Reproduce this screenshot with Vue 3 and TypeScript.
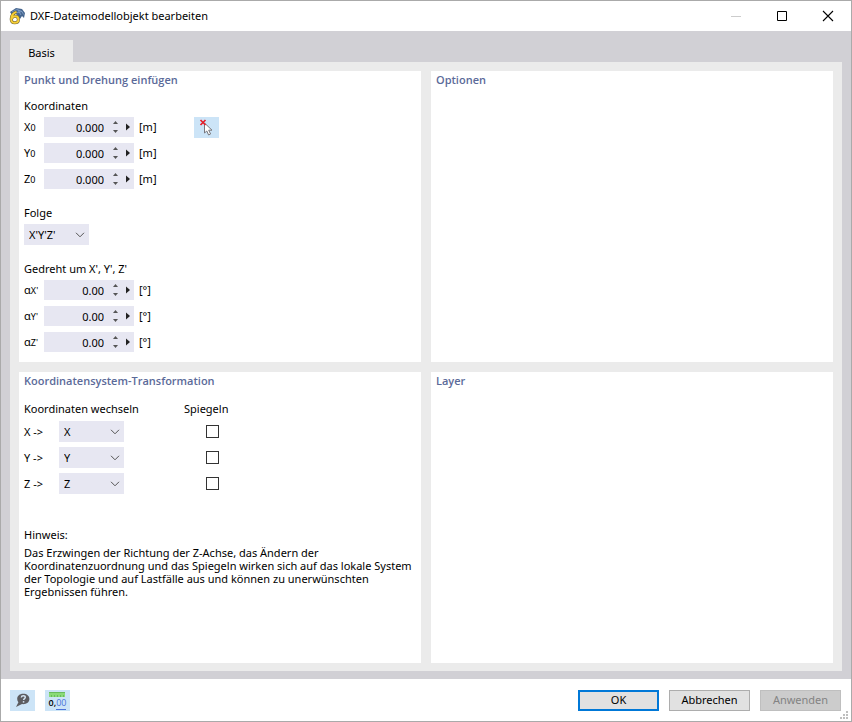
<script setup lang="ts">
import { reactive, ref } from 'vue'

interface NumberField {
  id: string
  base: string
  sub: string
  value: string
}

interface AxisMapping {
  axis: string
  target: string
  mirror: boolean
}

const coordinates = reactive<NumberField[]>([
  { id: 'x0', base: 'X', sub: '0', value: '0.000' },
  { id: 'y0', base: 'Y', sub: '0', value: '0.000' },
  { id: 'z0', base: 'Z', sub: '0', value: '0.000' },
])

const rotations = reactive<NumberField[]>([
  { id: 'ax', base: 'α', sub: "X'", value: '0.00' },
  { id: 'ay', base: 'α', sub: "Y'", value: '0.00' },
  { id: 'az', base: 'α', sub: "Z'", value: '0.00' },
])

const groups = [
  { fields: coordinates, unit: '[m]', digits: 3 },
  { fields: rotations, unit: '[°]', digits: 2 },
]

const sequences = ["X'Y'Z'", "X'Z'Y'", "Y'X'Z'", "Y'Z'X'", "Z'X'Y'", "Z'Y'X'"]
const sequence = ref("X'Y'Z'")

const axes = ['X', 'Y', 'Z']
const mappings = reactive<AxisMapping[]>(
  axes.map((axis) => ({ axis, target: axis, mirror: false })),
)

function step(field: NumberField, delta: number, digits: number) {
  field.value = ((parseFloat(field.value) || 0) + delta).toFixed(digits)
}
</script>

<template>
  <div class="dialog">
    <header class="titlebar">
      <svg class="app-icon" width="18" height="18" viewBox="0 0 18 18" aria-hidden="true">
        <path d="M2 5 8 1l6 1 3 4-1 5-2-2-2 3-4-5-4 1z" fill="#46668f" />
        <path d="M4 5 9 2.500l5 2M8 6l6-1.500 1.500 3M10 3l3 5" stroke="#86a5cc" fill="none" stroke-width=".8" />
        <path d="M8.500 4.800C5 6 3.200 8.800 3.200 12c0 2.400 1.300 3.800 3.500 3.800s3.700-1.400 3.700-3.400-1.300-3.200-3.200-3.200c-1.800 0-3.400 1-3.700 2.800" fill="none" stroke="#6e6438" stroke-width="3" />
        <path d="M8.500 4.800C5 6 3.200 8.800 3.200 12c0 2.400 1.300 3.800 3.500 3.800s3.700-1.400 3.700-3.400-1.300-3.200-3.200-3.200c-1.800 0-3.400 1-3.700 2.800" fill="none" stroke="#f7cf35" stroke-width="1.900" />
      </svg>
      <h1>DXF-Dateimodellobjekt bearbeiten</h1>
      <div class="window-controls">
        <button type="button" aria-label="Minimieren" disabled>
          <svg width="12" height="12" viewBox="0 0 12 12"><path d="M1 6.500h10" stroke="#ccc" /></svg>
        </button>
        <button type="button" aria-label="Maximieren">
          <svg width="12" height="12" viewBox="0 0 12 12"><path d="M1.500 1.500h9v9h-9z" stroke="#000" fill="none" /></svg>
        </button>
        <button type="button" aria-label="Schließen">
          <svg width="12" height="12" viewBox="0 0 12 12"><path d="m1 1 10 10M11 1 1 11" stroke="#000" stroke-width="1.100" /></svg>
        </button>
      </div>
    </header>

    <main class="workspace">
      <div class="tabs" role="tablist">
        <button type="button" class="tab" role="tab" aria-selected="true">Basis</button>
      </div>
      <div class="page" role="tabpanel" aria-label="Basis">
        <section class="panel">
          <h2>Punkt und Drehung einfügen</h2>
          <template v-for="(group, index) in groups" :key="index">
            <div v-if="index === 1" class="block">
              <label class="heading" for="sequence">Folge</label>
              <span class="select">
                <select id="sequence" v-model="sequence">
                  <option v-for="item in sequences" :key="item">{{ item }}</option>
                </select>
                <svg class="chevron" width="10" height="6" viewBox="0 0 10 6"><path d="m1 .8 4 4 4-4" /></svg>
              </span>
            </div>
            <div class="block">
              <h3 class="heading">{{ index === 0 ? 'Koordinaten' : "Gedreht um X', Y', Z'" }}</h3>
              <div class="inputs">
                <div class="fields">
                  <div v-for="field in group.fields" :key="field.id" class="field">
                    <label :for="field.id">{{ field.base }}<span class="index">{{ field.sub }}</span></label>
                    <div class="spin">
                      <input :id="field.id" v-model="field.value" type="text" inputmode="decimal" />
                      <span class="arrows">
                        <button type="button" aria-label="Erhöhen" @click="step(field, 1, group.digits)">
                          <svg width="5" height="4" viewBox="0 0 5 4"><path d="M2.500 0 5 3H0z" /></svg>
                        </button>
                        <button type="button" aria-label="Verringern" @click="step(field, -1, group.digits)">
                          <svg width="5" height="4" viewBox="0 0 5 4"><path d="M2.500 4 0 1h5z" /></svg>
                        </button>
                      </span>
                      <button type="button" class="more" aria-label="Weitere Optionen">
                        <svg width="5" height="8" viewBox="0 0 5 8"><path d="M0 .5 4 4 0 7.500z" /></svg>
                      </button>
                    </div>
                    <span class="unit">{{ group.unit }}</span>
                  </div>
                </div>
                <button v-if="index === 0" type="button" class="tool" aria-label="Punkt auswählen">
                  <svg width="15" height="17" viewBox="0 0 15 17">
                    <path d="M5.500 4v10l2.300-2 1.800 4 2-1-1.900-3.800H13z" fill="#fff" stroke="#77777d" />
                    <path d="m1.500 1 5 5M6.500 1l-5 5" stroke="#e5202b" stroke-width="1.700" />
                  </svg>
                </button>
              </div>
            </div>
          </template>
        </section>

        <section class="panel"><h2>Optionen</h2></section>

        <section class="panel">
          <h2>Koordinatensystem-Transformation</h2>
          <div class="mapping">
            <h3 class="heading wide">Koordinaten wechseln</h3>
            <h3 class="heading">Spiegeln</h3>
            <template v-for="row in mappings" :key="row.axis">
              <label :for="'map-' + row.axis">{{ row.axis }} -&gt;</label>
              <span class="select">
                <select :id="'map-' + row.axis" v-model="row.target">
                  <option v-for="axis in axes" :key="axis">{{ axis }}</option>
                </select>
                <svg class="chevron" width="10" height="6" viewBox="0 0 10 6"><path d="m1 .8 4 4 4-4" /></svg>
              </span>
              <input v-model="row.mirror" type="checkbox" :aria-label="row.axis + ' spiegeln'" />
            </template>
          </div>
          <div class="note">
            <h3 class="heading">Hinweis:</h3>
            <p>
              Das Erzwingen der Richtung der Z-Achse, das Ändern der
              Koordinatenzuordnung und das Spiegeln wirken sich auf das lokale System
              der Topologie und auf Lastfälle aus und können zu unerwünschten
              Ergebnissen führen.
            </p>
          </div>
        </section>

        <section class="panel"><h2>Layer</h2></section>
      </div>
    </main>

    <footer class="footer">
      <button type="button" class="tool" aria-label="Hilfe">
        <svg width="15" height="15" viewBox="0 0 15 15">
          <path d="M8.200.8C4.600.8 2.200 3 2.200 6c0 1.300.4 2.400 1.200 3.300L1 14l6-2.900c4.500.4 7.400-1.900 7.400-5.100S11.800.8 8.200.8z" fill="#5c5c60" />
          <path d="M6.300 4.500c.1-1.200.9-1.800 2-1.800s2 .6 2 1.600c0 1.300-1.700 1.400-1.700 2.800" fill="none" stroke="#d4e4f2" stroke-width="1.400" />
          <path d="M7.800 8.100h1.500v1.500H7.800z" fill="#d4e4f2" />
        </svg>
      </button>
      <button type="button" class="tool units" aria-label="Einheiten und Dezimalstellen">
        <svg width="16" height="5" viewBox="0 0 16 5">
          <path d="M0 0h16v5H0z" fill="#8ada79" />
          <path d="M2.500 3v2M5.500 3v2M8.500 3v2M11.500 3v2M14.500 3v2M0 .5h16" stroke="#5fb254" stroke-width=".8" />
        </svg>
        <span class="digits">0,<span class="decimals">00</span></span>
      </button>
      <div class="actions">
        <button type="button" class="action primary">OK</button>
        <button type="button" class="action">Abbrechen</button>
        <button type="button" class="action" disabled>Anwenden</button>
      </div>
      <svg class="grip" width="8" height="8" viewBox="0 0 8 8" aria-hidden="true">
        <path d="M6 0h2v2H6zM3 3h2v2H3zM6 3h2v2H6zM0 6h2v2H0zM3 6h2v2H3zM6 6h2v2H6z" fill="#bfbfbf" />
      </svg>
    </footer>
  </div>
</template>

<style>
body {
  margin: 0;
}
</style>

<style scoped>
.dialog,
.dialog * {
  box-sizing: border-box;
}

.dialog {
  display: flex;
  flex-direction: column;
  min-height: 100vh;
  border: 1px solid #aaa;
  background: #fff;
  color: #000;
  font-family: "Noto Sans", "Open Sans", sans-serif;
  font-size: 11px;
  line-height: 16px;
}

button,
input,
select {
  margin: 0;
  padding: 0;
  border: 0;
  border-radius: 0;
  background: none;
  color: inherit;
  font: inherit;
}

svg {
  display: block;
}

h1,
h2,
h3,
p {
  margin: 0;
  font-size: inherit;
  font-weight: 400;
}

.titlebar {
  display: flex;
  align-items: center;
  height: 30px;
  padding-left: 7px;
}

.titlebar h1 {
  margin-left: 4px;
}

.window-controls {
  display: flex;
  margin-left: auto;
}

.window-controls button {
  display: grid;
  place-items: center;
  width: 46px;
  height: 30px;
}

.workspace {
  display: flex;
  flex: 1;
  flex-direction: column;
  padding: 9px 9px 8px;
  background: #d1d0d5;
}

.tab {
  width: 63px;
  height: 22px;
  padding-top: 3px;
  background: #ebebeb;
}

.tabs {
  display: flex;
}

.page {
  display: grid;
  flex: 1;
  grid-template-columns: 1fr 1fr;
  grid-template-rows: 1fr 1fr;
  gap: 10px;
  padding: 9px 9px 8px;
  background: #ebebeb;
}

.panel {
  padding: 0 5px 9px;
  background: #fff;
}

.panel h2 {
  color: #5b6a99;
  font-family: "Open Sans", "Noto Sans", sans-serif;
  font-weight: 600;
  line-height: 18px;
}

.heading {
  display: block;
  margin-bottom: 3px;
}

.block {
  margin-top: 16px;
}

h2 + .block {
  margin-top: 9px;
}

.inputs {
  display: flex;
  align-items: flex-start;
}

.fields {
  display: grid;
  gap: 6px;
}

.field {
  display: grid;
  grid-template-columns: 20px 90px 60px;
  align-items: center;
  height: 20px;
}

.index {
  font-size: 9px;
}

.spin {
  display: flex;
  align-items: center;
  height: 20px;
  background: #e7e7f2;
}

.spin input {
  width: 60px;
  height: 20px;
  text-align: right;
}

.arrows {
  display: grid;
  gap: 4px;
  margin-left: 9px;
  fill: #555;
}

.more {
  margin-left: 8px;
  fill: #222;
}

.unit {
  padding-left: 5px;
}

.tool {
  display: grid;
  place-content: center;
  justify-items: center;
  width: 25px;
  height: 21px;
  background: #cce4f7;
}

.select {
  display: grid;
  align-items: center;
  width: 65px;
  height: 21px;
  background: #e7e7f2;
}

.select select {
  grid-area: 1 / 1;
  width: 100%;
  height: 21px;
  padding-left: 5px;
  appearance: none;
}

.chevron {
  grid-area: 1 / 1;
  justify-self: end;
  margin-right: 4px;
  fill: none;
  stroke: #555;
  pointer-events: none;
}

.mapping {
  display: grid;
  grid-template-columns: 35px 125px 57px;
  row-gap: 5px;
  align-items: center;
  margin-top: 11px;
}

.mapping .heading {
  margin: 0 0 -1px;
}

.mapping .wide {
  grid-column: span 2;
}

.mapping input {
  justify-self: center;
  width: 13px;
  height: 13px;
  border: 1px solid #333;
  background: #fff;
  appearance: none;
}

.mapping input:checked {
  background: #333;
  box-shadow: inset 0 0 0 2px #fff;
}

.note {
  margin-top: 33px;
}

.note p {
  max-width: 392px;
  line-height: 13px;
}

.footer {
  position: relative;
  display: flex;
  gap: 10px;
  align-items: center;
  height: 42px;
  padding: 0 10px 0 9px;
}

.digits {
  font-family: "Open Sans", "Noto Sans", sans-serif;
  font-size: 9px;
  font-weight: 600;
  line-height: 12px;
}

.decimals {
  border-bottom: 1px solid #4a72d8;
  color: #4a72d8;
  font-weight: 400;
}

.actions {
  display: flex;
  gap: 10px;
  margin-left: auto;
}

.action {
  width: 81px;
  height: 21px;
  border: 1px solid #adadad;
  background: #e1e1e1;
}

.action.primary {
  border: 2px solid #0078d7;
}

.action:disabled {
  border-color: #bfbfbf;
  background: #ccc;
  color: #838383;
}

.grip {
  position: absolute;
  right: 3px;
  bottom: 2px;
}
</style>
